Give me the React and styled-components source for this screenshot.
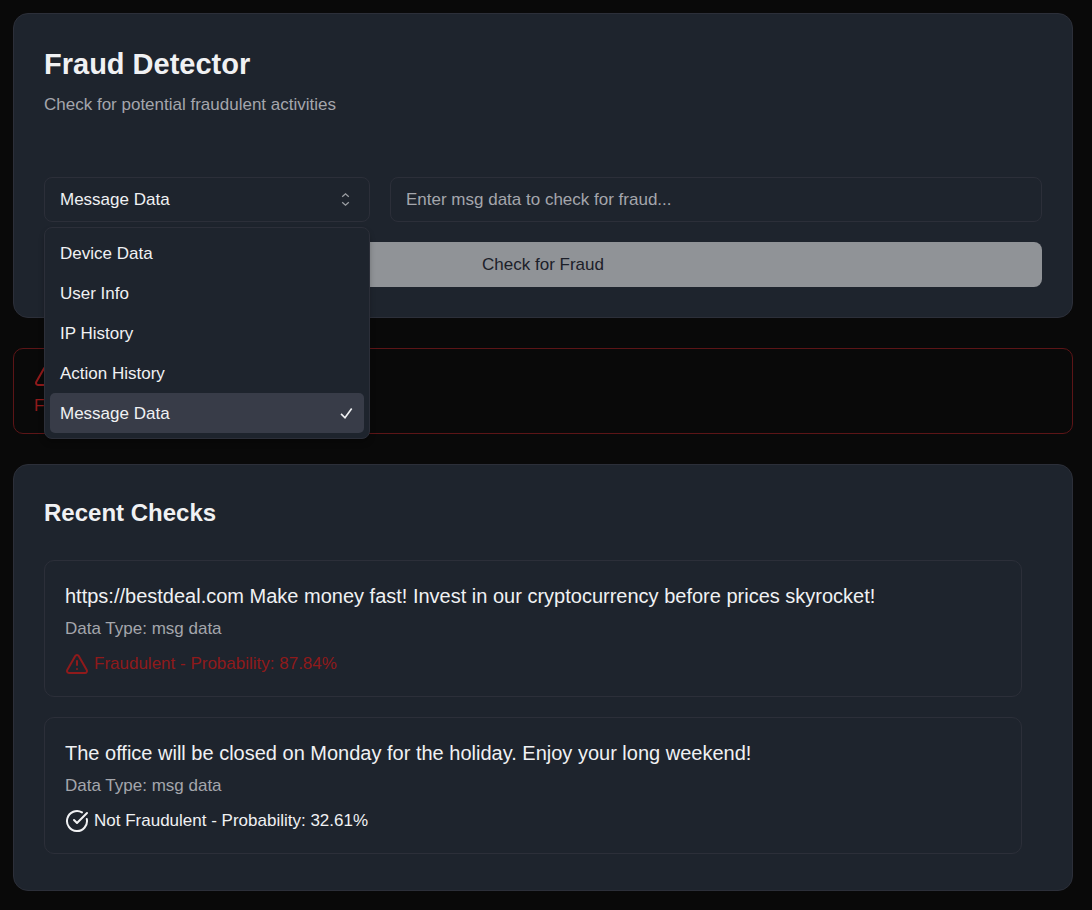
import React, {useState} from 'react';
import styled, {createGlobalStyle} from 'styled-components';
import {CircleCheckBig, TriangleAlert} from 'lucide-react';

const GlobalStyle = createGlobalStyle`
  *, *::before, *::after {
    box-sizing: border-box;
  }
  body {
    margin: 0;
    background: #090909;
    color: #f0f1f3;
    font-family: "Liberation Sans", Arial, sans-serif;
    font-size: 17px;
    line-height: 25px;
  }
  h1, h2, p, ul {
    margin: 0;
    padding: 0;
  }
  button, input, select {
    font: inherit;
    color: inherit;
  }
`;

const Page = styled.main`
  display: flex;
  flex-direction: column;
  gap: 30px;
  padding: 13px 19px 19px 13px;
`;
const Card = styled.section`
  padding: 30px;
  background: #1e242d;
  border: 1px solid #2c2f39;
  border-radius: 15px;
`;
const CardHeader = styled.header`
  display: flex;
  flex-direction: column;
  gap: 8px;
  margin-bottom: 60px;
`;
const Title = styled.h1`
  font-size: 29px;
  line-height: 40px;
`;
const Subtitle = styled.h2`
  margin-bottom: 30px;
  font-size: 24px;
  line-height: 35px;
`;
const Muted = styled.p`
  color: #a4a6ac;
`;

const Form = styled.form`
  display: grid;
  grid-template-columns: 1fr 2fr;
  gap: 20px;
`;
const Dropdown = styled.div`
  position: relative;
  display: grid;
  align-items: center;
`;
const Select = styled.select`
  grid-area: 1 / 1;
  width: 100%;
  height: 45px;
  padding: 0 40px 0 15px;
  appearance: none;
  background: transparent;
  border: 1px solid #2c2f39;
  border-radius: 8px;
  outline: none;
`;
const Caret = styled.svg`
  grid-area: 1 / 1;
  justify-self: end;
  margin-right: 15px;
  opacity: 0.6;
  pointer-events: none;
`;
const Menu = styled.ul`
  position: absolute;
  top: calc(100% + 5px);
  left: 0;
  z-index: 10;
  width: 100%;
  padding: 5px;
  list-style: none;
  background: #1e242d;
  border: 1px solid #2c2f39;
  border-radius: 8px;
  box-shadow: 0 4px 6px -1px rgba(0, 0, 0, 0.3);
`;
const Option = styled.button`
  display: flex;
  align-items: center;
  justify-content: space-between;
  width: 100%;
  height: 40px;
  padding: 0 8px 0 10px;
  text-align: left;
  background: ${(props) => (props.$selected ? '#383c48' : 'transparent')};
  border: 0;
  border-radius: 5px;
`;
const Input = styled.input`
  width: 100%;
  height: 45px;
  padding: 0 15px;
  background: transparent;
  border: 1px solid #2c2f39;
  border-radius: 8px;
  outline: none;
  &::placeholder {
    color: #a4a6ac;
    opacity: 1;
  }
`;
const Submit = styled.button`
  grid-column: 1 / -1;
  height: 45px;
  color: #1c2029;
  background: #909397;
  border: 0;
  border-radius: 8px;
`;

const Alert = styled.div`
  display: flex;
  flex-direction: column;
  gap: 5px;
  padding: 15px 20px;
  color: #8f1a1b;
  border: 1px solid #5c1517;
  border-radius: 10px;
`;

const CheckList = styled.ul`
  display: flex;
  flex-direction: column;
  gap: 20px;
  min-height: 300px;
  padding-right: 20px;
  list-style: none;
`;
const CheckItem = styled.li`
  padding: 20px;
  border: 1px solid #2c2f39;
  border-radius: 10px;
`;
const Message = styled.p`
  margin-bottom: 5px;
  font-size: 20px;
  line-height: 30px;
`;
const Status = styled.p`
  display: flex;
  align-items: center;
  gap: 5px;
  margin-top: 10px;
  color: ${(props) => (props.$fraud ? '#8f1a1b' : 'inherit')};
`;

const dataTypes = [
  {value: 'device', label: 'Device Data'},
  {value: 'user', label: 'User Info'},
  {value: 'ip', label: 'IP History'},
  {value: 'action', label: 'Action History'},
  {value: 'msg', label: 'Message Data'},
];

const checks = [
  {
    id: 1,
    text: 'https://bestdeal.com Make money fast! Invest in our cryptocurrency before prices skyrocket!',
    type: 'msg',
    fraud: true,
    probability: '87.84',
  },
  {
    id: 2,
    text: 'The office will be closed on Monday for the holiday. Enjoy your long weekend!',
    type: 'msg',
    fraud: false,
    probability: '32.61',
  },
];

const DataTypeSelect = ({value, onChange}) => {
  const [open, setOpen] = useState(true);

  // the styled menu replaces the browser's own popup
  const toggle = (e) => {
    e.preventDefault();
    setOpen(!open);
  };

  const pick = (next) => {
    onChange(next);
    setOpen(false);
  };

  return (
    <Dropdown>
      <Select
        aria-label="Data type"
        value={value}
        onMouseDown={toggle}
        onChange={(e) => onChange(e.target.value)}
      >
        {dataTypes.map((type) => (
          <option key={type.value} value={type.value}>
            {type.label}
          </option>
        ))}
      </Select>
      <Caret width="19" height="19" viewBox="0 0 15 15" fill="none" stroke="currentColor">
        <path d="M4.9 5.4 7.5 3 10.1 5.4M4.9 9.6 7.5 12 10.1 9.6" />
      </Caret>
      {open && (
        <Menu>
          {dataTypes.map((type) => (
            <li key={type.value}>
              <Option
                type="button"
                $selected={type.value === value}
                onClick={() => pick(type.value)}
              >
                {type.label}
                {type.value === value && (
                  <svg width="19" height="19" viewBox="0 0 15 15" fill="none" stroke="currentColor" strokeWidth="1.3">
                    <path d="M3.2 7.8 6.3 10.9 11.6 3.6" />
                  </svg>
                )}
              </Option>
            </li>
          ))}
        </Menu>
      )}
    </Dropdown>
  );
};

const App = () => {
  const [dataType, setDataType] = useState('msg');
  const [data, setData] = useState('');
  const latest = checks[0];

  const handleSubmit = (e) => {
    e.preventDefault();
  };

  return (
    <React.Fragment>
      <GlobalStyle />
      <Page>
        <Card>
          <CardHeader>
            <Title>Fraud Detector</Title>
            <Muted>Check for potential fraudulent activities</Muted>
          </CardHeader>
          <Form onSubmit={handleSubmit}>
            <DataTypeSelect value={dataType} onChange={setDataType} />
            <Input
              aria-label="Data to check"
              placeholder={`Enter ${dataType} data to check for fraud...`}
              value={data}
              onChange={(e) => setData(e.target.value)}
            />
            <Submit type="submit" disabled={!data}>
              Check for Fraud
            </Submit>
          </Form>
        </Card>

        <Alert role="alert">
          <TriangleAlert size={24} />
          <p>Fraudulent - Probability: {latest.probability}%</p>
        </Alert>

        <Card>
          <Subtitle>Recent Checks</Subtitle>
          <CheckList>
            {checks.map((check) => (
              <CheckItem key={check.id}>
                <Message>{check.text}</Message>
                <Muted>Data Type: {check.type} data</Muted>
                <Status $fraud={check.fraud}>
                  {check.fraud ? <TriangleAlert size={24} /> : <CircleCheckBig size={24} />}
                  {check.fraud ? 'Fraudulent' : 'Not Fraudulent'} - Probability: {check.probability}%
                </Status>
              </CheckItem>
            ))}
          </CheckList>
        </Card>
      </Page>
    </React.Fragment>
  );
};

export default App;
